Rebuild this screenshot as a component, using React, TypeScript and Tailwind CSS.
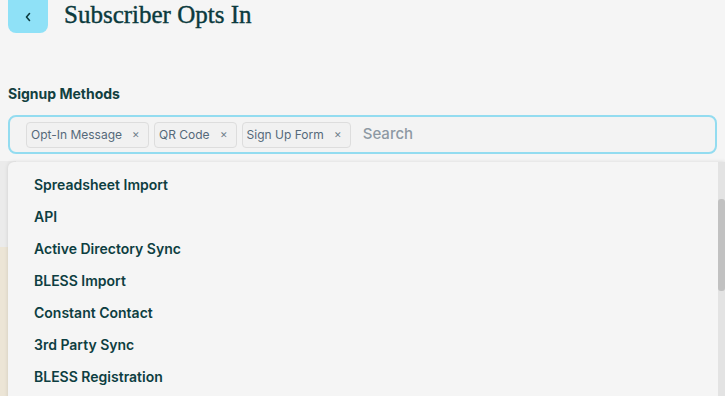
import React from 'react';

const selected = ['Opt-In Message', 'QR Code', 'Sign Up Form'];

const options = [
  'Spreadsheet Import',
  'API',
  'Active Directory Sync',
  'BLESS Import',
  'Constant Contact',
  '3rd Party Sync',
  'BLESS Registration',
];

const App: React.FC = () => {
  return (
    <div className="h-[396px] w-[725px] overflow-hidden bg-[#f5f5f5] font-['Inter',sans-serif] text-[#0d3b3e]">
      {/* header */}
      <div className="mt-[-8px] flex items-center gap-[16px] px-[8px]">
        <button className="flex h-[41px] w-[40px] items-center justify-center rounded-[8px] bg-[#8fe1f7] pt-[8px]">
          <svg width="8" height="10" viewBox="0 0 8 10" fill="none">
            <path d="M5.5 1.5L2.5 5l3 3.5" stroke="#0d3b3e" strokeWidth="1.6" strokeLinecap="round" strokeLinejoin="round" />
          </svg>
        </button>
        <h1 className="pt-[4px] font-['Liberation_Serif',serif] text-[25px] leading-none text-[#0b3a3d] [-webkit-text-stroke:0.4px_#0b3a3d]">
          Subscriber Opts In
        </h1>
      </div>

      <div className="px-[8px] pt-[52px]">
        <label className="block text-[14px] font-bold leading-[18px] text-[#12403f]">Signup Methods</label>

        {/* multi select */}
        <div className="relative mt-[12px]">
          <div className="flex h-[39px] items-center gap-[5px] rounded-[8px] border-2 border-[#93dcf0] bg-[#f3f3f3] pl-[16px] pr-[8px]">
            {selected.map((s) => (
              <span
                key={s}
                className="flex h-[26px] items-center gap-[10px] rounded-[4px] border border-[#dddddd] bg-[#f1f1f1] pl-[4px] pr-[8px] text-[12px] text-[#55697a]"
              >
                {s}
                <span className="text-[9px] text-[#6d7c88]">✕</span>
              </span>
            ))}
            <span className="ml-[7px] text-[15px] font-medium text-[#8d99a3]">Search</span>
          </div>

          {/* content behind the menu */}
          <div className="mt-[7px] ml-[-8px] h-[86px] w-[16px] bg-[#ebebeb]" />
          <div className="ml-[-8px] h-[200px] w-[16px] bg-[#ece5d6]" />

          {/* dropdown menu */}
          <div className="absolute left-0 right-[-8px] top-[47px] flex h-[260px] rounded-tl-[6px] bg-[#f5f5f5] shadow-[0_0_4px_rgba(0,0,0,0.12)]">
            <ul className="flex-1 pt-[6px]">
              {options.map((o) => (
                <li key={o} className="flex h-[32px] items-center pl-[26px] text-[14px] font-semibold text-[#0d3e41]">
                  {o}
                </li>
              ))}
            </ul>
            <div className="w-[7px] bg-[#e3e3e3] pt-[37px]">
              <div className="h-[92px] rounded-[3px] bg-[#c1c1c1]" />
            </div>
          </div>
        </div>
      </div>
    </div>
  );
};

export default App;
